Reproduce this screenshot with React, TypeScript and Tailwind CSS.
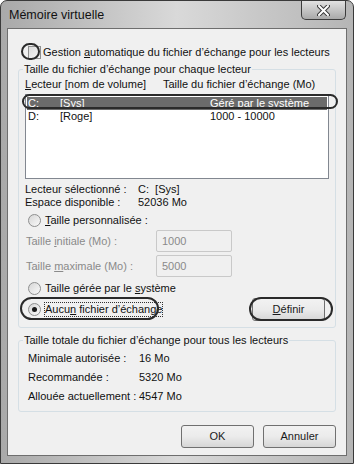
import React from "react";

function Radio({ checked }: { checked?: boolean }) {
    return (
        <span className="w-[13px] h-[13px] rounded-full border border-[#8e8f8f] bg-gradient-to-br from-[#d6d6d6] to-[#fafafa] flex items-center justify-center shrink-0">
            {checked && <span className="w-[5px] h-[5px] rounded-full bg-[#1a1a1a]" />}
        </span>
    );
}

function Field({ value }: { value: string }) {
    return (
        <div className="w-[76px] h-[22px] border border-[#c9c9c9] bg-[#f0f0f0] rounded-[2px] flex items-center pl-[5px] text-[#8a8a8a]">
            {value}
        </div>
    );
}

function Button({ children }: { children: React.ReactNode }) {
    return (
        <div className="w-[73px] h-[23px] border border-[#707070] rounded-[3px] bg-gradient-to-b from-[#f2f2f2] via-[#ebebeb] to-[#d6d6d6] flex items-center justify-center text-[#1a1a1a]">
            {children}
        </div>
    );
}

export default function App() {
    return (
        <div
            className="relative w-[354px] h-[464px] bg-gradient-to-r from-[#a9a9a9] via-[#d9d9d9] to-[#b5b5b5] border border-[#3a3a3a] rounded-t-[7px] overflow-hidden text-[11px] leading-[13px] text-[#111] whitespace-nowrap"
            style={{ fontFamily: '"Liberation Sans", Arial, sans-serif' }}
        >
            {/* title bar */}
            <div className="h-[27px] flex items-center justify-between pl-[8px]">
                <span className="text-[12.5px] text-[#111] pt-[2px]">Mémoire virtuelle</span>
                <div className="self-start mr-[7px] w-[45px] h-[19px] border border-[#3c3c3c] border-t-0 rounded-b-[5px] bg-gradient-to-b from-[#e2e2e2] to-[#a9a9a9] flex items-center justify-center">
                    <svg width="13" height="11" viewBox="0 0 13 11">
                        <path d="M2 1 L11 10 M11 1 L2 10" stroke="#3a3a3a" strokeWidth="4" strokeLinecap="round" />
                        <path d="M2 1 L11 10 M11 1 L2 10" stroke="#ffffff" strokeWidth="2" strokeLinecap="round" />
                    </svg>
                </div>
            </div>

            {/* client */}
            <div className="mx-[6px] h-[428px] bg-[#f0f0f0] border border-[#6e6e6e] relative px-[10px]">
                {/* auto checkbox */}
                <div className="flex items-center gap-[2px] pt-[16px] pl-[10px] h-[30px]">
                    <span className="w-[13px] h-[13px] border border-[#8e8f8f] bg-gradient-to-br from-[#dcdcdc] to-[#f6f6f6] shrink-0" />
                    <span>Gestion <u>a</u>utomatique du fichier d’échange pour les lecteurs</span>
                </div>

                {/* group 1 */}
                <div className="relative mt-[10px] h-[259px] border border-[#d5dfe5] rounded-[3px] px-[6px] pt-[6px]">
                    <span className="absolute -top-[7px] left-[4px] bg-[#f0f0f0] px-[1px]">
                        Taille du fichier d’échange pour chaque lecteur
                    </span>
                    <div className="flex h-[16px] items-center">
                        <span className="w-[138px] shrink-0"><u>L</u>ecteur [nom de volume]</span>
                        <span>Taille du fichier d’échange (Mo)</span>
                    </div>
                    <div className="mt-[2px] h-[85px] border border-[#828790] bg-white pt-[2px] px-[1px]">
                        <div className="flex h-[13px] items-center bg-[#6b6b6b] text-white">
                            <span className="w-[33px] shrink-0 pl-[1px]">C:</span>
                            <span className="w-[150px] shrink-0">[Sys]</span>
                            <span>Géré par le système</span>
                        </div>
                        <div className="flex h-[13px] items-center">
                            <span className="w-[33px] shrink-0 pl-[1px]">D:</span>
                            <span className="w-[150px] shrink-0">[Roge]</span>
                            <span>1000 - 10000</span>
                        </div>
                    </div>

                    <div className="mt-[4px]">
                        <div className="flex">
                            <span className="w-[113px]">Lecteur sélectionné :</span>
                            <span>C:&nbsp;&nbsp;[Sys]</span>
                        </div>
                        <div className="flex">
                            <span className="w-[113px]">Espace disponible :</span>
                            <span>52036 Mo</span>
                        </div>
                    </div>

                    <div className="flex items-center gap-[4px] mt-[5px] pl-[3px]">
                        <Radio />
                        <span><u>T</u>aille personnalisée :</span>
                    </div>

                    <div className="flex items-center justify-between w-[207px] mt-[3px] pl-[1px] text-[#8a8a8a]">
                        <span>Taille <u>i</u>nitiale (Mo) :</span>
                        <Field value="1000" />
                    </div>
                    <div className="flex items-center justify-between w-[207px] mt-[3px] pl-[1px] text-[#8a8a8a]">
                        <span>Taille <u>m</u>aximale (Mo) :</span>
                        <Field value="5000" />
                    </div>

                    <div className="flex items-center gap-[4px] mt-[5px] pl-[3px]">
                        <Radio />
                        <span>Taille gérée par le <u>s</u>ystème</span>
                    </div>
                    <div className="flex items-center justify-between mt-[3px] pr-[4px]">
                        <div className="flex items-center gap-[4px] pl-[3px]">
                            <Radio checked />
                            <span className="outline-1 outline-dotted outline-[#333]">Aucu<u>n</u> fichier d’échange</span>
                        </div>
                        <Button>
                            <span><u>D</u>éfinir</span>
                        </Button>
                    </div>
                </div>

                {/* group 2 */}
                <div className="relative mt-[12px] h-[72px] border border-[#d5dfe5] rounded-[3px] px-[9px] pt-[8px] leading-[19px]">
                    <span className="absolute -top-[7px] left-[4px] bg-[#f0f0f0] px-[1px] leading-[13px]">
                        Taille totale du fichier d’échange pour tous les lecteurs
                    </span>
                    <div className="flex">
                        <span className="w-[111px]">Minimale autorisée :</span>
                        <span>16 Mo</span>
                    </div>
                    <div className="flex">
                        <span className="w-[111px]">Recommandée :</span>
                        <span>5320 Mo</span>
                    </div>
                    <div className="flex">
                        <span className="w-[111px]">Allouée actuellement :</span>
                        <span>4547 Mo</span>
                    </div>
                </div>

                <div className="flex justify-end gap-[9px] mt-[13px]">
                    <Button>OK</Button>
                    <Button>Annuler</Button>
                </div>

                {/* annotation rings */}
                <div className="absolute left-[13px] top-[14px] w-[19px] h-[17px] rounded-full border-2 border-[#2a2a2a]" />
                <div className="absolute left-[14px] top-[65px] w-[316px] h-[15px] rounded-full border-2 border-[#2a2a2a]" />
                <div className="absolute left-[12px] top-[268px] w-[139px] h-[23px] rounded-full border-2 border-[#2a2a2a]" />
                <div className="absolute left-[241px] top-[268px] w-[84px] h-[24px] rounded-[12px] border-2 border-[#2a2a2a]" />
            </div>
        </div>
    );
}
